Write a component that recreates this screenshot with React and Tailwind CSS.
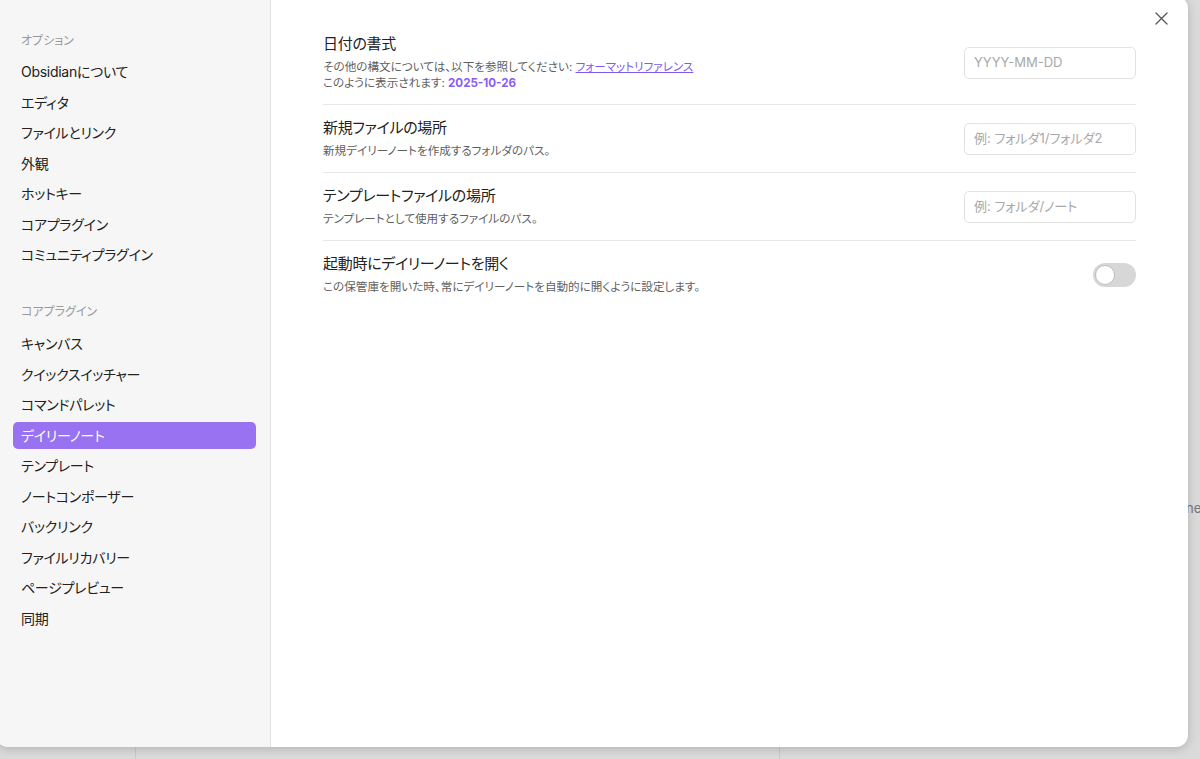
import React from "react";

const group1 = ["Obsidianについて", "エディタ", "ファイルとリンク", "外観", "ホットキー", "コアプラグイン", "コミュニティプラグイン"];
const group2 = ["キャンバス", "クイックスイッチャー", "コマンドパレット", "デイリーノート", "テンプレート", "ノートコンポーザー", "バックリンク", "ファイルリカバリー", "ページプレビュー", "同期"];

const font = "font-['Inter','Noto_Sans_CJK_JP',sans-serif] [font-feature-settings:'palt']";

function NavItem({ label, active }) {
  return (
    <div
      className={
        "h-[27px] mb-[3.5px] pl-2 flex items-center rounded-[5px] text-[14px] tracking-[-0.02em] " +
        (active ? "bg-[#9872f1] text-white" : "text-[#222]")
      }
    >
      {label}
    </div>
  );
}

function Row({ title, children, control, last }) {
  return (
    <div className={"flex items-center pt-[13px] pb-[13px] " + (last ? "" : "border-b border-[#e6e6e6]")}>
      <div className="flex-1 min-w-0">
        <div className="text-[15px] leading-5 text-[#222] tracking-[-0.02em]">{title}</div>
        <div className="mt-[5px] text-[11.6px] leading-4 text-[#5f5f5f]">{children}</div>
      </div>
      {control}
    </div>
  );
}

function Input({ placeholder }) {
  return (
    <div className="w-[172px] h-[32px] rounded-[5px] border border-[#e2e2e2] bg-white flex items-center pl-[9px] text-[13px] text-[#a8a8a8]">
      {placeholder}
    </div>
  );
}

export default function App() {
  return (
    <div className={"relative w-[1200px] h-[759px] overflow-hidden bg-[#dadada] " + font}>
      {/* background remnants */}
      <div className="absolute left-[135px] top-[740px] w-px h-[19px] bg-[#c9c9c9]" />
      <div className="absolute left-[779px] top-[740px] w-px h-[19px] bg-[#c9c9c9]" />
      <div className="absolute left-[1186px] top-[499px] text-[13px] text-[#777]">ne</div>

      {/* modal */}
      <div className="absolute left-[-4px] top-[-4px] w-[1192px] h-[751px] bg-white rounded-[12px] shadow-[0_2px_10px_rgba(0,0,0,0.18)] flex overflow-hidden">
        <div className="w-[275px] shrink-0 bg-[#f6f6f6] border-r border-[#e3e3e3] pt-[33px] pl-[17px] pr-[14px]">
          <div className="h-6 pl-2 flex items-center text-[12px] text-[#9a9a9a] mb-[5px]">オプション</div>
          {group1.map((l) => (
            <NavItem key={l} label={l} />
          ))}
          <div className="h-6 pl-2 flex items-center text-[12px] text-[#9a9a9a] mt-[32px] mb-[6px]">コアプラグイン</div>
          {group2.map((l) => (
            <NavItem key={l} label={l} active={l === "デイリーノート"} />
          ))}
        </div>

        <div className="relative flex-1 pl-[52px] pr-[52px] pt-[25px]">
          <button className="absolute right-[19px] top-[14px] w-4 h-4 flex items-center justify-center text-[#555]">
            <svg width="13" height="13" viewBox="0 0 13 13" fill="none" stroke="currentColor" strokeWidth="1.3" strokeLinecap="round">
              <path d="M1 1L12 12M12 1L1 12" />
            </svg>
          </button>

          <Row title="日付の書式" control={<Input placeholder="YYYY-MM-DD" />}>
            <div>
              その他の構文については、以下を参照してください:{" "}
              <span className="text-[#7c5cf2] underline">フォーマットリファレンス</span>
            </div>
            <div>
              このように表示されます: <span className="font-bold text-[#8a5cf5]">2025-10-26</span>
            </div>
          </Row>
          <Row title="新規ファイルの場所" control={<Input placeholder="例: フォルダ1/フォルダ2" />}>
            新規デイリーノートを作成するフォルダのパス。
          </Row>
          <Row title="テンプレートファイルの場所" control={<Input placeholder="例: フォルダ/ノート" />}>
            テンプレートとして使用するファイルのパス。
          </Row>
          <Row
            title="起動時にデイリーノートを開く"
            last
            control={
              <div className="w-[43px] h-[24px] rounded-full bg-[#d7d7d7] flex items-center pl-[2px]">
                <div className="w-[20px] h-[20px] rounded-full bg-white border border-[#bdbdbd]" />
              </div>
            }
          >
            この保管庫を開いた時、常にデイリーノートを自動的に開くように設定します。
          </Row>
        </div>
      </div>
    </div>
  );
}
